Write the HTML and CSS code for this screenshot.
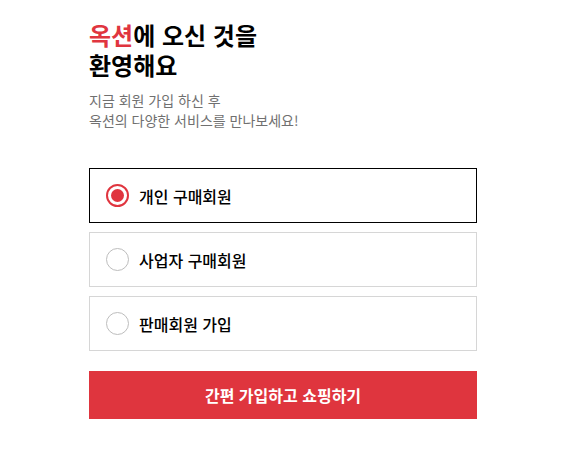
FILE: index.html
```html
<!DOCTYPE html>
<html lang="ko">
<head>
<meta charset="utf-8">
<link rel="stylesheet" href="styles.css">
</head>
<body>
<main class="page">
  <h1 class="title"><span class="line"><span class="brand">옥션</span>에 오신 것을</span><span class="line">환영해요</span></h1>
  <p class="desc">지금 회원 가입 하신 후<br>옥션의 다양한 서비스를 만나보세요!</p>
  <div class="options">
    <label class="option selected"><span class="radio"></span><span class="label">개인 구매회원</span></label>
    <label class="option"><span class="radio"></span><span class="label">사업자 구매회원</span></label>
    <label class="option"><span class="radio"></span><span class="label">판매회원 가입</span></label>
  </div>
  <button class="cta">간편 가입하고 쇼핑하기</button>
</main>
</body>
</html>
```
FILE: styles.css
```css
html, body {
  margin: 0;
  padding: 0;
  background: #fff;
}
body {
  font-family: "Noto Sans CJK KR", "Noto Sans", sans-serif;
  color: #111;
}
.page {
  width: 388px;
  padding: 20px 0 0 89px;
}
.title {
  margin: 0;
  font-size: 24px;
  line-height: 30px;
  font-weight: 700;
  color: #000;
}
.title .line {
  display: block;
  height: 30px;
}
.brand {
  color: #e0353f;
}
.desc {
  margin: 10px 0 0;
  font-size: 14px;
  line-height: 20px;
  color: #707070;
}
.options {
  margin-top: 38px;
  display: flex;
  flex-direction: column;
  gap: 9px;
}
.option {
  box-sizing: border-box;
  height: 55px;
  border: 1px solid #d6d6d6;
  display: flex;
  align-items: center;
  padding-left: 16px;
  gap: 10px;
}
.option.selected {
  border-color: #000;
}
.radio {
  box-sizing: border-box;
  width: 23px;
  height: 23px;
  border-radius: 50%;
  border: 1px solid #bdbdbd;
  display: flex;
  align-items: center;
  justify-content: center;
}
.selected .radio {
  border: 2px solid #e0353f;
}
.selected .radio::after {
  content: "";
  width: 13px;
  height: 13px;
  border-radius: 50%;
  background: #e0353f;
}
.label {
  font-size: 16px;
  font-weight: 500;
  color: #000;
}
.cta {
  display: block;
  margin-top: 20px;
  width: 388px;
  height: 48px;
  border: 0;
  background: #df353e;
  color: #fff;
  font-family: "Noto Sans CJK KR", "Noto Sans", sans-serif;
  font-size: 16px;
  font-weight: 700;
  padding: 0;
}
```
